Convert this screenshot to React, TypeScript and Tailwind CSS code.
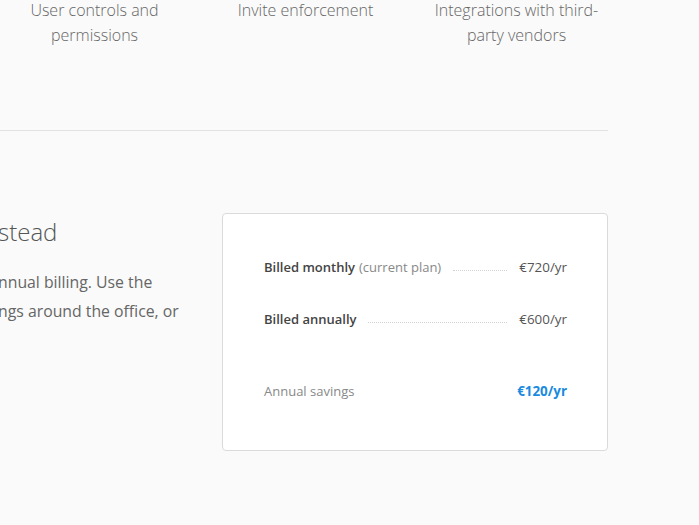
import React from 'react';

// ============================================================
// Billing comparison section
// Features strip, divider, annual billing pitch and price card
// ============================================================

const features = [
  'User controls and permissions',
  'Invite enforcement',
  'Integrations with third-party vendors',
];

function Leader() {
  return <span className="flex-1 ml-3 mr-[12px] mt-[13px] border-b border-dotted border-[#d2d2d2]" />;
}

export default function App() {
  return (
    <div
      className="w-[699px] h-[525px] overflow-hidden bg-[#fafafa] text-[#666]"
      style={{ fontFamily: '"Open Sans", "Liberation Sans", sans-serif' }}
    >
      <div className="w-[608px]">
        <div className="-mt-[2px] ml-[-11px] grid grid-cols-[211px_211px_211px] h-[132px]">
          {features.map((f) => (
            <div key={f} className="flex justify-center">
              <p className="w-[180px] text-center text-[16px] leading-[25px] font-light text-[#666]">{f}</p>
            </div>
          ))}
        </div>
        <div className="border-t border-[#e2e2e2]" />

        <div className="flex pt-[82px]">
          <div className="w-[222px] -ml-[2px] pt-[3px]">
            <h2 className="text-[24px] leading-[32px] font-light text-[#555]">stead</h2>
            <p className="mt-[20px] text-[15.8px] leading-[29px] text-[#666]">
              nnual billing. Use the
              <br />
              ngs around the office, or
            </p>
          </div>

          <div className="ml-[2px] w-[386px] h-[238px] bg-white border border-[#dadada] rounded-[4px] pl-[41px] pr-[40px] pt-[43px] text-[13px]">
            <div className="flex items-start h-[20px] leading-[20px]">
              <span className="font-semibold text-[#444]">Billed monthly</span>
              <span className="ml-1 text-[#888]">(current plan)</span>
              <Leader />
              <span className="text-[#555] text-[13.4px]">€720/yr</span>
            </div>
            <div className="flex items-start h-[20px] leading-[20px] mt-[32px]">
              <span className="font-semibold text-[#444]">Billed annually</span>
              <Leader />
              <span className="text-[#555] text-[13.4px]">€600/yr</span>
            </div>
            <div className="flex justify-between h-[20px] leading-[20px] mt-[52px]">
              <span className="text-[#888]">Annual savings</span>
              <span className="font-bold text-[#1a8ae0] text-[13.4px]">€120/yr</span>
            </div>
          </div>
        </div>
      </div>
    </div>
  );
}
